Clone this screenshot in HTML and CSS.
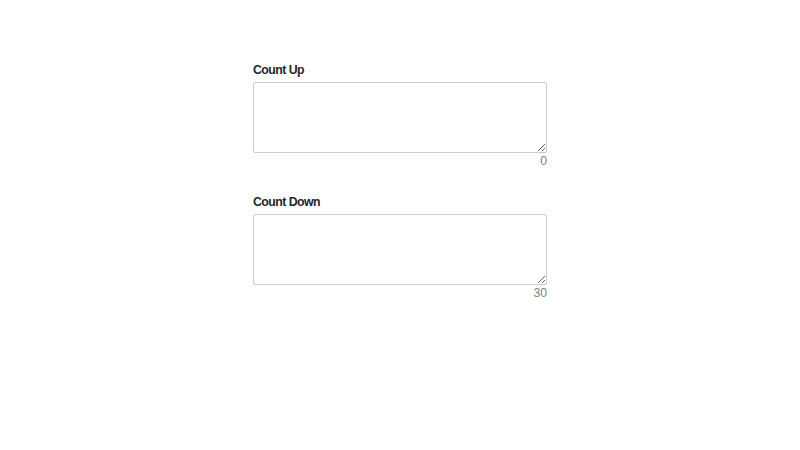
FILE: index.html
```html
<!DOCTYPE html>
<html>
<head>
<meta charset="utf-8">
<link rel="stylesheet" href="styles.css">
</head>
<body>
<div class="form">
  <div class="field">
    <label class="label" for="up">Count Up</label>
    <textarea id="up" class="box"></textarea>
    <div class="counter">0</div>
  </div>
  <div class="field">
    <label class="label" for="down">Count Down</label>
    <textarea id="down" class="box"></textarea>
    <div class="counter">30</div>
  </div>
</div>
</body>
</html>
```
FILE: styles.css
```css
html, body {
  margin: 0;
  padding: 0;
  background: #fff;
}
body {
  font-family: "Liberation Sans", Arial, sans-serif;
}
.form {
  width: 294px;
  margin: 62px 0 0 253px;
  display: flex;
  flex-direction: column;
  gap: 25px;
}
.field {
  display: flex;
  flex-direction: column;
}
.label {
  font-size: 12.3px;
  line-height: 16px;
  font-weight: bold;
  letter-spacing: -0.55px;
  color: #262626;
  margin-bottom: 4px;
}
.box {
  box-sizing: border-box;
  width: 294px;
  height: 71px;
  margin: 0;
  border: 1px solid #ccc;
  border-radius: 2px;
  padding: 4px 6px;
  font-family: "Liberation Sans", Arial, sans-serif;
  font-size: 13px;
  display: block;
}
.counter {
  text-align: right;
  font-size: 12.2px;
  line-height: 16px;
  color: #808080;
}
```
